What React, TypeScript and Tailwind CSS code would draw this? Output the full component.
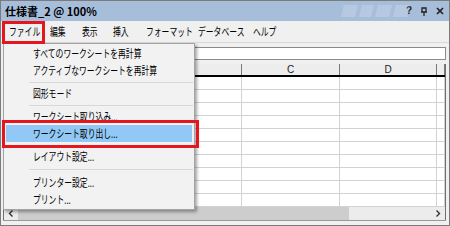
import React from "react";

// label + box width, so each item starts where the reference has it
const MENU_BAR: [string, string][] = [
  ["ファイル", "w-[41px]"],
  ["編集", "w-[32px]"],
  ["表示", "w-[31px]"],
  ["挿入", "w-[33px]"],
  ["フォーマット", "w-[52px]"],
  ["データベース", "w-[55px]"],
  ["ヘルプ", "w-[40px]"],
];

type MenuEntry = { label: string; active?: boolean } | { sep: number };

const FILE_MENU: MenuEntry[] = [
  { label: "すべてのワークシートを再計算" },
  { label: "アクティブなワークシートを再計算" },
  { sep: 6 },
  { label: "図形モード" },
  { sep: 6 },
  { label: "ワークシート取り込み..." },
  { label: "ワークシート取り出し...", active: true },
  { sep: 6 },
  { label: "レイアウト設定..." },
  { sep: 9 },
  { label: "プリンター設定..." },
  { label: "プリント..." },
];

// column letters A / B sit under the open menu, so they are left blank
const COLS = ["", "", "", "C", "D", ""];

function Chevron({ dir }: { dir: "left" | "right" }) {
  return (
    <svg width="6" height="7" viewBox="0 0 6 7">
      <path
        d={dir === "left" ? "M4.5 0.5 L1.5 3.5 L4.5 6.5" : "M1.5 0.5 L4.5 3.5 L1.5 6.5"}
        fill="none"
        stroke="#333"
        strokeWidth="1.4"
      />
    </svg>
  );
}

// the Windows UI face has narrow kana; squeeze the Noto glyphs to match
function Narrow({ children }: { children: React.ReactNode }) {
  return <span className="inline-block origin-left scale-x-[0.71] whitespace-nowrap">{children}</span>;
}

export default function App() {
  const jp = "font-['Noto_Sans_CJK_JP','Noto_Sans',sans-serif]";

  return (
    <div className={`relative h-[226px] w-[450px] overflow-hidden border border-[#7b7b7b] bg-[#f0f0f0] ${jp}`}>
      {/* title bar */}
      <div className="relative flex h-[20px] items-center bg-[#a7bedb] pl-[4px] pr-[5px]">
        <span className="text-[11px] font-bold leading-none text-black">仕様書_2 @ 100%</span>
        <svg className="absolute left-[335px] top-0" width="90" height="20" viewBox="0 0 90 20">
          <g fill="#ffffff" opacity="0.18">
            <path d="M8 4 H22 L19 16 H5 Z" />
            <path d="M26 4 H38 L35 16 H23 Z" />
            <path d="M42 4 H56 L53 16 H39 Z" />
            <path d="M60 4 H74 L71 16 H57 Z" />
          </g>
        </svg>
        <div className="ml-auto flex items-center gap-[8px]">
          <span className="font-['Liberation_Sans',sans-serif] text-[10px] font-bold leading-none text-[#222]">?</span>
          <svg width="8" height="9" viewBox="0 0 8 9">
            <path d="M2 1 H6 V5 H2 Z M1 5 H7 M4 5 V9" fill="none" stroke="#222" strokeWidth="1.3" />
          </svg>
          <svg width="8" height="8" viewBox="0 0 8 8">
            <path d="M1 1 L7 7 M7 1 L1 7" stroke="#222" strokeWidth="1.7" />
          </svg>
        </div>
      </div>

      {/* menu bar */}
      <div className="flex h-[21px] items-center pl-[8px] text-[11px] leading-none text-black">
        {MENU_BAR.map(([m, w]) => (
          <span key={m} className={`shrink-0 ${w}`}>
            <Narrow>{m}</Narrow>
          </span>
        ))}
      </div>
      <div className="h-px bg-[#d8d8d8]" />

      {/* formula row */}
      <div className="flex h-[21px] items-center pr-[3px]">
        <div className="ml-auto h-[13px] w-[320px] border border-[#8a8a8a] bg-white" />
      </div>

      {/* sheet */}
      <div className="ml-[2px] w-[443px] border-x border-[#6e6e6e] bg-white">
        <div className="grid h-[13px] grid-cols-[44px_97px_97px_98px_97px_1fr] border-b-2 border-black bg-[#ededed] font-['Liberation_Sans',sans-serif] text-[10px] leading-none text-[#222]">
          {COLS.map((c, i) => (
            <div key={i} className="flex items-center justify-center border-r border-[#7a7a7a]">
              {c}
            </div>
          ))}
        </div>
        {Array.from({ length: 10 }).map((_, r) => (
          <div key={r} className="grid h-[13px] grid-cols-[44px_97px_97px_98px_97px_1fr] border-b border-[#d2d2d2]">
            {COLS.map((_, i) => (
              <div key={i} className="border-r border-[#d2d2d2]" />
            ))}
          </div>
        ))}
        {/* horizontal scrollbar */}
        <div className="flex h-[13px] items-center bg-[#ececec]">
          <div className="flex w-[14px] justify-center">
            <Chevron dir="left" />
          </div>
          <div className="h-full w-[331px] bg-[#cdcdcd]" />
          <div className="flex-1 bg-[#f0f0f0]" />
          <div className="flex w-[14px] justify-center">
            <Chevron dir="right" />
          </div>
        </div>
      </div>
      <div className="ml-[2px] h-px w-[443px] bg-[#9a9a9a]" />

      {/* file menu dropdown */}
      <div className="absolute left-[2px] top-[42px] w-[192px] border border-[#a3a3a3] bg-[#f2f2f2] py-[1px] text-[11px] leading-none text-black shadow-[2px_2px_3px_rgba(0,0,0,0.35)]">
        {FILE_MENU.map((e, i) =>
          "sep" in e ? (
            <div key={i} className={`flex items-center pl-[25px] pr-[1px] ${e.sep === 9 ? "h-[9px]" : "h-[6px]"}`}>
              <div className="h-px w-full bg-[#d7d7d7]" />
            </div>
          ) : (
            <div
              key={i}
              className={`mx-[2px] flex h-[17px] items-center pl-[27px] ${e.active ? "bg-[#92c8f5]" : ""}`}
            >
              <Narrow>{e.label}</Narrow>
            </div>
          )
        )}
      </div>

      {/* highlight boxes */}
      <div className="absolute left-[1px] top-[20px] h-[23px] w-[43px] border-[3px] border-[#e4161f]" />
      <div className="absolute left-[1px] top-[119px] h-[28px] w-[197px] border-[3px] border-[#e4161f]" />
    </div>
  );
}
